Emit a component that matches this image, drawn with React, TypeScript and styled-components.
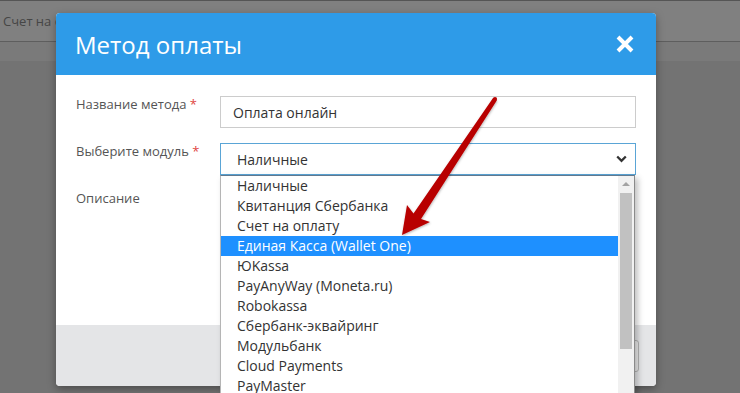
import React from "react";
import styled, { createGlobalStyle } from "styled-components";

const modules = [
  "Наличные",
  "Квитанция Сбербанка",
  "Счет на оплату",
  "Единая Касса (Wallet One)",
  "ЮKassa",
  "PayAnyWay (Moneta.ru)",
  "Robokassa",
  "Сбербанк-эквайринг",
  "Модульбанк",
  "Cloud Payments",
  "PayMaster",
];

const GlobalStyle = createGlobalStyle`
  html, body {
    margin: 0;
    padding: 0;
    height: 393px;
    overflow: hidden;
  }

  body {
    font-family: "Open Sans", "Liberation Sans", sans-serif;
    background: #737373;
  }

  * {
    box-sizing: border-box;
  }
`;

const Page = styled.div`
  position: relative;
  width: 740px;
  height: 393px;
  overflow: hidden;
  background: #737373;
`;

const TopBar = styled.div`
  height: 42px;
  border-top: 1px solid #555555;
  border-bottom: 1px solid #5e5e5e;
  background: #808080;
  display: flex;
  align-items: center;
  padding-left: 3px;
  color: #464646;
  font-size: 13px;
`;

const SubBar = styled.div`
  height: 19px;
  background: #7a7a7a;
`;

const Modal = styled.div`
  position: absolute;
  left: 56px;
  top: 13px;
  width: 600px;
  border-radius: 4px;
  background: #ffffff;
  box-shadow: 0 3px 9px rgba(0, 0, 0, 0.35);
`;

const ModalHeader = styled.div`
  display: flex;
  align-items: center;
  justify-content: space-between;
  height: 62px;
  padding: 0 22px 0 19px;
  border-radius: 4px 4px 0 0;
  background: #2e9be8;
  color: #ffffff;

  h2 {
    margin: 0;
    font-size: 24px;
    font-weight: 400;
    line-height: 1;
    padding-top: 1px;
  }
`;

const CloseButton = styled.span`
  display: inline-flex;
  width: 18px;
  height: 18px;
`;

const ModalBody = styled.div`
  height: 250px;
  padding: 21px 20px 0 20px;
  display: flex;
  flex-direction: column;
  gap: 15px;
`;

const FormRow = styled.div`
  display: flex;
  align-items: flex-start;
`;

const Label = styled.label`
  width: 144px;
  flex-shrink: 0;
  color: #555555;
  font-size: 13px;
  line-height: 17px;

  span {
    color: #e0453f;
  }
`;

const Field = styled.div<{ $focused?: boolean }>`
  position: relative;
  flex: 1;
  height: 32px;
  display: flex;
  align-items: center;
  justify-content: space-between;
  padding: 0 8px 0 ${(p) => (p.$focused ? "16px" : "12px")};
  border: 1px solid ${(p) => (p.$focused ? "#5aa5d6" : "#cccccc")};
  background: #ffffff;
  color: #333333;
  font-size: 14px;
`;

const Chevron = styled.svg`
  width: 11px;
  height: 8px;
  margin-top: -1px;
`;

const DropList = styled.ul`
  position: absolute;
  left: -1px;
  top: 31px;
  width: 415px;
  margin: 0;
  padding: 0 16px 0 0;
  list-style: none;
  background: #ffffff;
  border-top: 1px solid #62798e;
  border-left: 1px solid #b5b5b5;
  border-right: 1px solid #8a8a8a;
  box-shadow: 3px 3px 6px rgba(0, 0, 0, 0.25);
  z-index: 2;
`;

const DropItem = styled.li<{ $active?: boolean }>`
  height: 20px;
  line-height: 20px;
  padding-left: 16px;
  font-size: 14px;
  color: ${(p) => (p.$active ? "#ffffff" : "#333333")};
  background: ${(p) => (p.$active ? "#1e90ff" : "transparent")};
  white-space: nowrap;
`;

const Scrollbar = styled.div`
  position: absolute;
  top: 0;
  right: 0;
  bottom: 0;
  width: 16px;
  background: #f1f1f1;
  display: flex;
  flex-direction: column;
  align-items: center;
`;

const ScrollArrow = styled.div`
  margin-top: 6px;
  width: 0;
  height: 0;
  border-left: 4px solid transparent;
  border-right: 4px solid transparent;
  border-bottom: 4px solid #a3a3a3;
`;

const ScrollThumb = styled.div`
  margin-top: 7px;
  width: 12px;
  height: 156px;
  background: #c1c1c1;
`;

const ModalFooter = styled.div`
  height: 61px;
  display: flex;
  align-items: center;
  justify-content: flex-end;
  padding: 0 17px;
  border-radius: 0 0 4px 4px;
  background: #e4e5e7;
`;

const FooterButton = styled.span`
  display: inline-block;
  width: 90px;
  height: 32px;
  border: 1px solid #b4b4b4;
  border-radius: 3px;
  background: #ececec;
`;

const Arrow = styled.svg`
  position: absolute;
  left: 0;
  top: 0;
  width: 740px;
  height: 393px;
  pointer-events: none;
  z-index: 5;
`;

export default function App() {
  return (
    <Page>
      <GlobalStyle />
      <TopBar>Счет на оплату</TopBar>
      <SubBar />

      <Modal>
        <ModalHeader>
          <h2>Метод оплаты</h2>
          <CloseButton>
            <svg width="18" height="18" viewBox="0 0 18 18">
              <path
                d="M2 2 L16 16 M16 2 L2 16"
                stroke="#ffffff"
                strokeWidth="4"
                strokeLinecap="butt"
              />
            </svg>
          </CloseButton>
        </ModalHeader>

        <ModalBody>
          <FormRow>
            <Label>
              Название метода <span>*</span>
            </Label>
            <Field>Оплата онлайн</Field>
          </FormRow>
          <FormRow>
            <Label>
              Выберите модуль <span>*</span>
            </Label>
            <Field $focused>
              Наличные
              <Chevron viewBox="0 0 11 8">
                <path
                  d="M1.2 1.5 L5.5 5.8 L9.8 1.5"
                  fill="none"
                  stroke="#333333"
                  strokeWidth="2.3"
                />
              </Chevron>
              <DropList>
                {modules.map((name, i) => (
                  <DropItem key={name} $active={i === 3}>
                    {name}
                  </DropItem>
                ))}
                <Scrollbar>
                  <ScrollArrow />
                  <ScrollThumb />
                </Scrollbar>
              </DropList>
            </Field>
          </FormRow>
          <FormRow>
            <Label>Описание</Label>
          </FormRow>
        </ModalBody>

        <ModalFooter>
          <FooterButton />
        </ModalFooter>
      </Modal>

      <Arrow viewBox="0 0 740 393">
        <defs>
          <filter id="arrowShadow" x="-20%" y="-20%" width="140%" height="140%">
            <feDropShadow dx="0.5" dy="1" stdDeviation="1" floodOpacity="0.3" />
          </filter>
        </defs>
        <polygon
          filter="url(#arrowShadow)"
          fill="#b80000"
          points="402,235 407,205 413.5,213.5 493.2,97.8 496.8,100.4 421,219 430,222"
        />
        <circle cx="495" cy="99.1" r="2.1" fill="#b80000" />
      </Arrow>
    </Page>
  );
}
